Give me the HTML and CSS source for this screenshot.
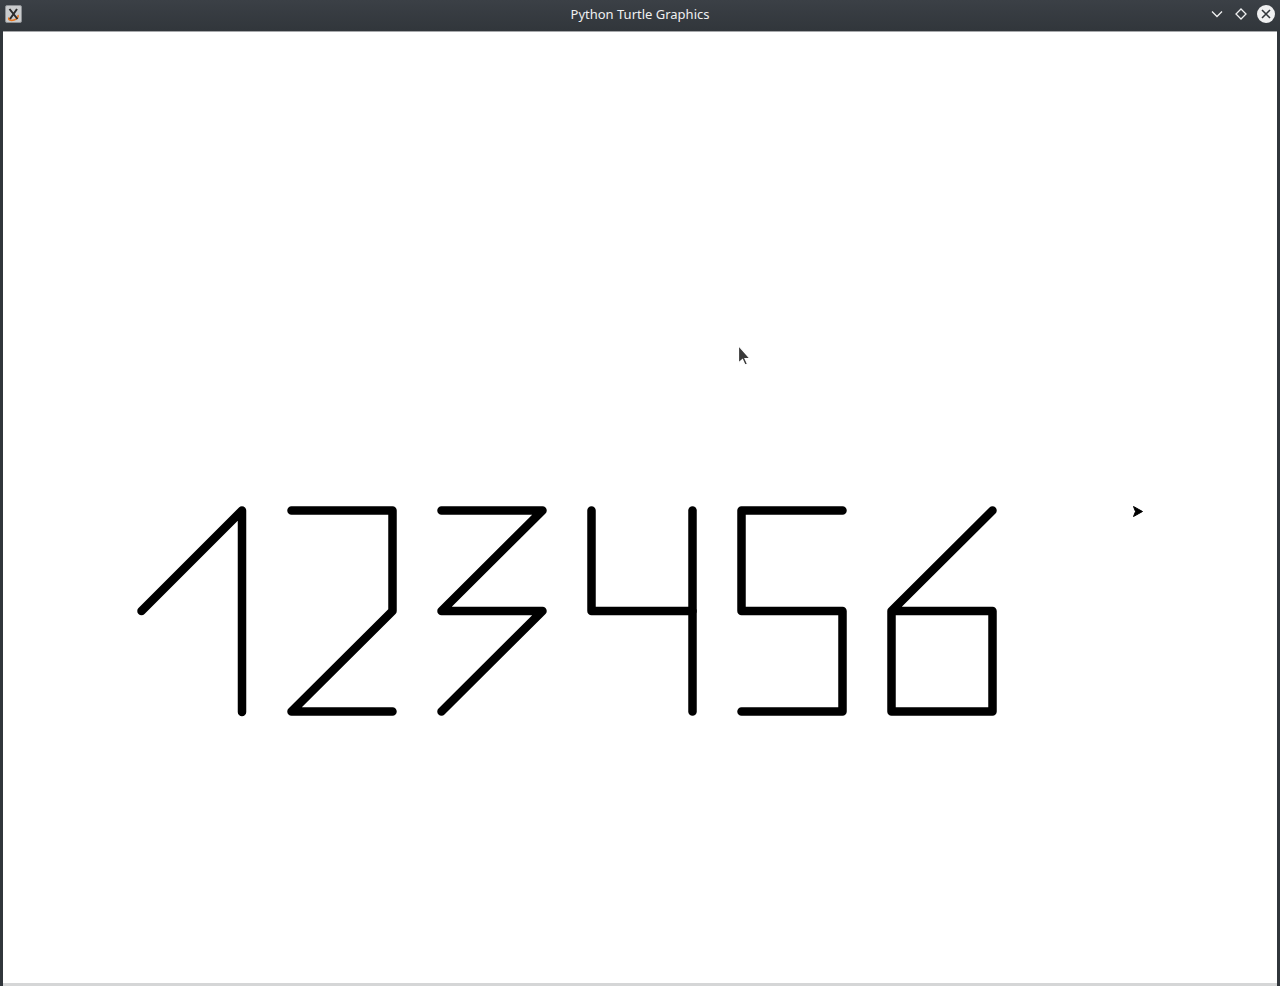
FILE: index.html
```html
<!DOCTYPE html>
<html>
<head>
<meta charset="utf-8">
<title>Python Turtle Graphics</title>
<link rel="stylesheet" href="styles.css">
</head>
<body>
<div class="window">
  <header class="titlebar">
    <div class="app-icon">
      <svg width="17" height="18" viewBox="0 0 17 18">
        <rect x="0.5" y="0.5" width="16" height="17" rx="1.5" fill="#c9cbcd" stroke="#8d9094"/>
        <path d="M4 12.5 C3 15 6 16 9 15 C12 14 13.5 12 13 10" fill="none" stroke="#e8761e" stroke-width="1.6"/>
        <path d="M4.5 4 L12.5 14 M12 4 L5 14" stroke="#2a2a2a" stroke-width="2"/>
      </svg>
    </div>
    <div class="title">Python Turtle Graphics</div>
    <div class="controls">
      <svg class="ctl" width="16" height="16" viewBox="0 0 16 16"><path d="M3 5.5 L8 10.5 L13 5.5" fill="none" stroke="#eff0f1" stroke-width="1.3"/></svg>
      <svg class="ctl" width="16" height="16" viewBox="0 0 16 16"><path d="M8 3 L13 8 L8 13 L3 8 Z" fill="none" stroke="#eff0f1" stroke-width="1.3"/></svg>
      <svg class="ctl close" width="18" height="18" viewBox="0 0 18 18"><circle cx="9" cy="9" r="9" fill="#eff0f1"/><path d="M5 5 L13 13 M13 5 L5 13" stroke="#31363b" stroke-width="1.6"/></svg>
    </div>
  </header>
  <main class="frame">
    <div class="canvas">
      <svg class="drawing" width="1274" height="951" viewBox="3 32 1274 951">
        <g fill="none" stroke="#000" stroke-width="8.5" stroke-linecap="round" stroke-linejoin="round">
          <polyline points="141.5,611 242,510.5 242,712"/>
          <polyline points="291.5,510.5 392.5,510.5 392.5,611 291.5,711.5 392.5,711.5"/>
          <polyline points="441.5,510.5 542.5,510.5 441.5,611 542.5,611 441.5,711.5"/>
          <polyline points="591.5,510.5 591.5,611 692.5,611"/>
          <polyline points="692.5,510.5 692.5,711.5"/>
          <polyline points="842.5,510.5 741.5,510.5 741.5,611 842.5,611 842.5,711.5 741.5,711.5"/>
          <polyline points="992.5,510.5 891.5,611 891.5,711.5 992.5,711.5 992.5,611 891.5,611"/>
        </g>
        <polygon points="1142.5,511.5 1133.5,506.5 1135.5,511.5 1133.5,516.5" fill="#000" stroke="#000" stroke-width="1"/>
        <path d="M738.5 345.5 L738.5 363 L742.5 359.5 L745 365 L747.5 364 L745 358.5 L750 358.5 Z" fill="#3a3a3a" stroke="#fff" stroke-width="1.2"/>
      </svg>
    </div>
  </main>
</div>
</body>
</html>
```
FILE: styles.css
```css
html, body {
  margin: 0;
  padding: 0;
  width: 1280px;
  height: 986px;
  overflow: hidden;
  background: #31363b;
}

.window {
  display: flex;
  flex-direction: column;
  width: 1280px;
  height: 986px;
}

.titlebar {
  height: 31px;
  flex: none;
  display: grid;
  grid-template-columns: 1fr auto 1fr;
  align-items: center;
  background: linear-gradient(#3b4046, #31363b);
  font-family: "Noto Sans", "Open Sans", sans-serif;
  font-size: 13px;
  color: #eff0f1;
}

.app-icon {
  width: 17px;
  height: 18px;
  margin-left: 5px;
  margin-top: -3px;
  display: flex;
}

.title {
  text-align: center;
  line-height: 18px;
  margin-top: -4px;
}

.controls {
  justify-self: end;
  display: flex;
  align-items: center;
  gap: 8px;
  margin-right: 5px;
  margin-top: -3px;
}

.ctl {
  display: block;
}

.frame {
  flex: 1;
  display: flex;
  padding: 0 3px 0 3px;
}

.canvas {
  flex: 1;
  background: #ffffff;
  border-top: 1px solid #a6a8ab;
  border-bottom: 3px solid #d5d6d7;
  overflow: hidden;
}

.drawing {
  display: block;
}
```
